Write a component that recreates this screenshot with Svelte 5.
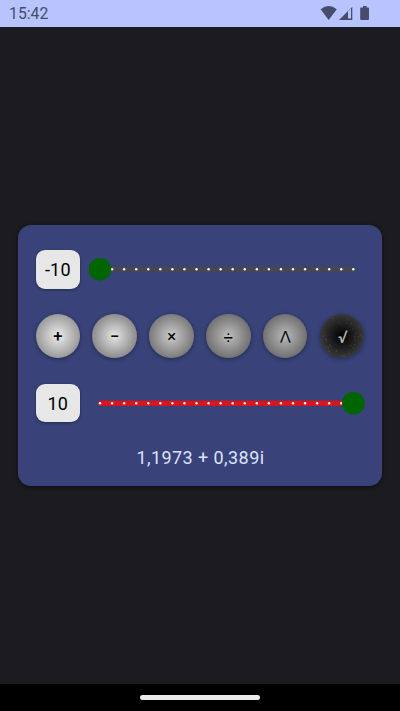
<script>
  const operators = [
    { sign: '+', center: '#ececec', edge: '#9a9a9a', kind: 'plain' },
    { sign: '−', center: '#e6e6e6', edge: '#8c8c8c', kind: 'plain' },
    { sign: '×', center: '#cccccc', edge: '#7c7c7c', kind: 'plain' },
    { sign: '÷', center: '#bebebe', edge: '#727272', kind: 'divide' },
    { sign: '⋀', center: '#bababa', edge: '#707070', kind: 'wedge' },
    { sign: '√', center: '#000000', edge: '#383838', kind: 'root' }
  ];
  const ticks = Array.from({ length: 22 }, (_, i) => 11 + i * 12.063);
  const specks = Array.from({ length: 44 }, (_, i) => {
    const angle = i * i * 1.37 + i;
    const radius = 12 + ((i * 37) % 100) / 11.5;
    return { x: 22.2 + radius * Math.cos(angle), y: 22.2 + radius * Math.sin(angle) };
  });
</script>

{#snippet slider(value, color, thumb, height)}
  <div class="row">
    <div class="value">{value}</div>
    <svg class="slider" width="276" height="38.6" viewBox="0 0 276 38.6">
      <rect x="9.5" y={19.3 - height / 2} width="256.4" height={height} rx="1" fill={color} />
      {#each ticks as x}
        <circle cx={x} cy="19.3" r="1.2" fill="#fff" />
      {/each}
      <circle cx={thumb} cy="19.3" r="11.3" fill="#006400" />
    </svg>
  </div>
{/snippet}

<div class="screen">
  <header>
    <span>15:42</span>
    <svg width="60" height="27" viewBox="0 0 60 27" fill="#474c6c">
      <path d="M.6 9.2Q8.7 2.8 16.8 9.2L8.7 20Z" />
      <path fill-rule="evenodd" d="M32.3 6.7V19.9H19ZM28 11.5V18.6H31V8.5Z" />
      <path d="M42 7.5h1V6h3.6v1.5H48.3q.7 0 .7.7V19q0 .9-.8.9H41q-.8 0-.8-.9V8.2q0-.7.6-.7Z" />
    </svg>
  </header>

  <main>
    <section class="card">
      {@render slider('-10', '#48484c', 10.9, 4.4)}
      <div class="operators">
        {#each operators as op}
          <button class={op.kind} style="--center: {op.center}; --edge: {op.edge}">
            {#if op.kind === 'root'}
              <svg class="specks" width="44.4" height="44.4">
                {#each specks as speck}
                  <circle cx={speck.x} cy={speck.y} r=".5" fill="#858585" opacity=".4" />
                {/each}
              </svg>
            {/if}
            <span>{op.sign}</span>
          </button>
        {/each}
      </div>
      {@render slider('10', '#e51119', 264.4, 5)}
      <output>1,1973 + 0,389i</output>
    </section>
  </main>

  <footer><div class="handle"></div></footer>
</div>

<style>
  .screen {
    width: 400px;
    height: 711px;
    display: flex;
    flex-direction: column;
    overflow: hidden;
    background: #1c1b20;
    font-family: Roboto, sans-serif;
  }
  header {
    height: 27px;
    flex: none;
    box-sizing: border-box;
    padding: 0 20px 0 9px;
    display: flex;
    justify-content: space-between;
    align-items: center;
    background: #b8c4ff;
    color: #474c6c;
    font-size: 15.8px;
  }
  header span {
    line-height: 27px;
  }
  main {
    flex: 1;
    display: flex;
    flex-direction: column;
    align-items: center;
    padding-top: 198px;
  }
  .card {
    width: 364px;
    height: 261px;
    box-sizing: border-box;
    padding: 25.2px 17.6px 0;
    border-radius: 13px;
    background: #394379;
    box-shadow: 0 1px 4px #0008;
  }
  .row {
    height: 38.6px;
    display: flex;
    gap: 8.7px;
  }
  .value {
    width: 44.5px;
    flex: none;
    line-height: 39.2px;
    text-align: center;
    font-size: 18px;
    letter-spacing: .2px;
    color: #000;
    background: #e7e7e8;
    border-radius: 9px;
    box-shadow: 0 1px 3px #0006;
  }
  .slider {
    flex: none;
  }
  .operators {
    display: flex;
    justify-content: space-between;
    margin: 25.2px 0 25.2px;
  }
  button {
    width: 44.4px;
    height: 44.4px;
    flex: none;
    padding: 0;
    border: 0;
    border-radius: 50%;
    display: grid;
    place-items: center;
    background: radial-gradient(circle closest-side, var(--center), var(--edge));
    box-shadow: 0 1px 4px #0006;
    color: #000;
    font: 500 16.5px Roboto, sans-serif;
  }
  button > * {
    grid-area: 1 / 1;
  }
  .divide {
    padding-top: 1px;
    font: 400 17px Roboto, sans-serif;
  }
  .wedge {
    padding-bottom: 1px;
    font: 12.5px "DejaVu Sans", sans-serif;
    -webkit-text-stroke: .2px #000;
  }
  .root {
    color: #b4b4b4;
    font: 500 16px Roboto, sans-serif;
  }
  .root span {
    transform: skewX(-5deg) scaleY(1.1);
  }
  output {
    display: block;
    margin-top: 23.4px;
    padding-left: 1px;
    line-height: 24px;
    text-align: center;
    font-size: 18px;
    letter-spacing: .42px;
    color: #dde1ff;
  }
  footer {
    height: 27px;
    flex: none;
    display: grid;
    place-items: center;
    background: #000;
  }
  .handle {
    width: 120px;
    height: 4.6px;
    border-radius: 3px;
    background: #ececec;
  }
</style>
